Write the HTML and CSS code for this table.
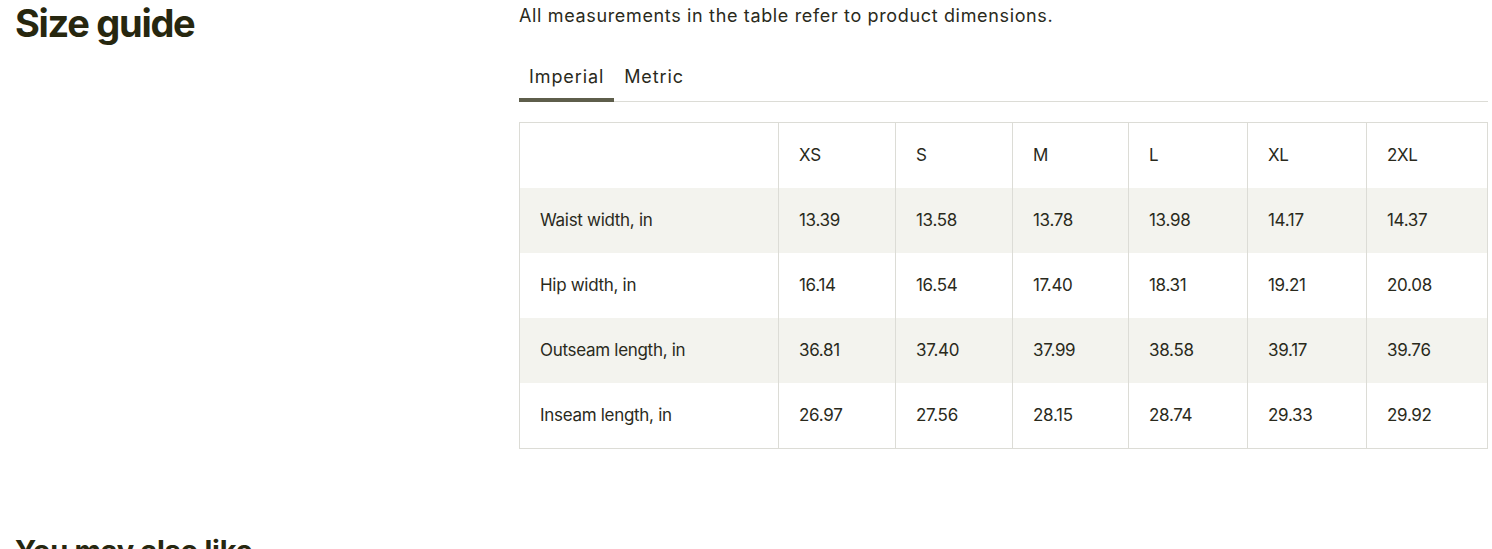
FILE: index.html
```html
<!DOCTYPE html>
<html lang="en">
<head>
<meta charset="utf-8">
<title>Size guide</title>
<link rel="stylesheet" href="styles.css">
</head>
<body>
<section class="size-guide">
  <div class="sg-left">
    <h2 class="sg-title">Size guide</h2>
  </div>
  <div class="sg-right">
    <p class="sg-note">All measurements in the table refer to product dimensions.</p>
    <div class="tabs">
      <button class="tab active">Imperial</button>
      <button class="tab">Metric</button>
    </div>
    <table class="sg-table">
      <colgroup>
        <col class="c0"><col class="c1"><col class="c2"><col class="c3"><col class="c4"><col class="c5"><col class="c6">
      </colgroup>
      <thead>
        <tr><th></th><th>XS</th><th>S</th><th>M</th><th>L</th><th>XL</th><th>2XL</th></tr>
      </thead>
      <tbody>
        <tr><td>Waist width, in</td><td>13.39</td><td>13.58</td><td>13.78</td><td>13.98</td><td>14.17</td><td>14.37</td></tr>
        <tr><td>Hip width, in</td><td>16.14</td><td>16.54</td><td>17.40</td><td>18.31</td><td>19.21</td><td>20.08</td></tr>
        <tr><td>Outseam length, in</td><td>36.81</td><td>37.40</td><td>37.99</td><td>38.58</td><td>39.17</td><td>39.76</td></tr>
        <tr class="last"><td>Inseam length, in</td><td>26.97</td><td>27.56</td><td>28.15</td><td>28.74</td><td>29.33</td><td>29.92</td></tr>
      </tbody>
    </table>
  </div>
</section>
<section class="related">
  <h2 class="related-title">You may also like</h2>
</section>
</body>
</html>
```
FILE: styles.css
```css
* { box-sizing: border-box; }
html, body { margin: 0; padding: 0; background: #fff; }
body {
  font-family: Inter, "Open Sans", Arial, sans-serif;
  color: #2a2a1c;
  padding: 0 4px 0 15px;
}
.size-guide {
  display: flex;
}
.sg-left {
  width: 504px;
  flex: none;
}
.sg-title {
  margin: 0;
  font-size: 38px;
  font-weight: 700;
  line-height: 46px;
  letter-spacing: -1.3px;
  color: #27270f;
}
.sg-right {
  flex: 1;
  min-width: 0;
}
.sg-note {
  margin: 4px 0 0;
  font-size: 18px;
  line-height: 24px;
  letter-spacing: 0.65px;
}
.tabs {
  display: flex;
  margin-top: 36px;
  border-bottom: 1px solid #dcdcd6;
}
.tab {
  background: none;
  border: none;
  font: inherit;
  font-size: 18px;
  line-height: 24px;
  letter-spacing: 0.9px;
  color: #2a2a1c;
  padding: 1px 10px 9px;
  margin-bottom: -1px;
  border-bottom: 4px solid transparent;
  cursor: pointer;
}
.tab.active {
  border-bottom-color: #5e5e4b;
}
.sg-table {
  margin-top: 20px;
  width: 100%;
  border-collapse: collapse;
  border: 1px solid #dcdcd6;
  font-size: 17px;
  table-layout: fixed;
}
.c0 { width: 259px; }
.c1 { width: 117px; }
.c2 { width: 117px; }
.c3 { width: 116px; }
.c4 { width: 119px; }
.c5 { width: 119px; }
.sg-table th,
.sg-table td {
  height: 65px;
  padding: 0 20px 1px;
  text-align: left;
  font-weight: 400;
  border-left: 1px solid #dcdcd6;
  letter-spacing: -0.3px;
}
.sg-table tr.last td {
  height: 66px;
}
.sg-table tbody tr:nth-child(odd) {
  background: #f3f3ee;
}
.related {
  margin-top: 82px;
}
.related-title {
  margin: 0;
  font-size: 29px;
  font-weight: 700;
  line-height: 40px;
  letter-spacing: -0.3px;
  color: #27270f;
}
```
